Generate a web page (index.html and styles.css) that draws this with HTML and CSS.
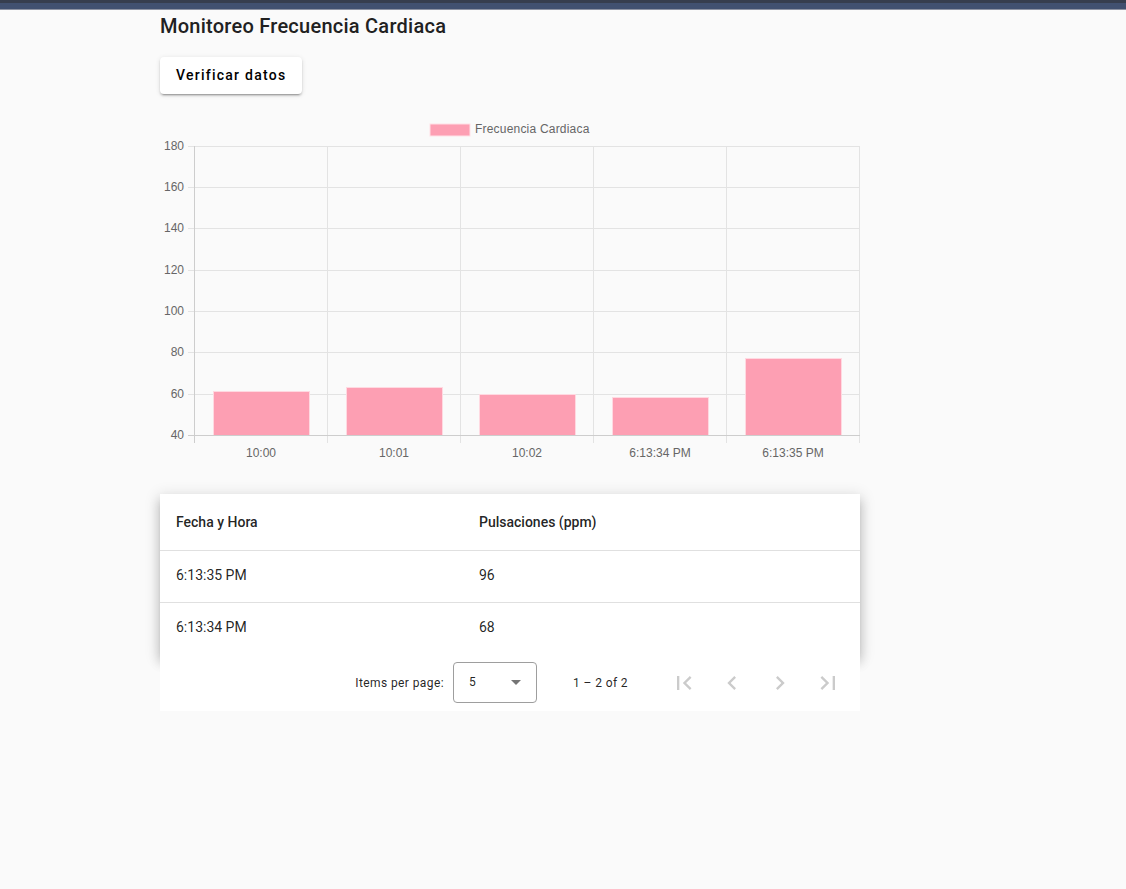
FILE: index.html
```html
<!DOCTYPE html>
<html lang="es">
<head>
<meta charset="utf-8">
<title>Monitoreo Frecuencia Cardiaca</title>
<link rel="stylesheet" href="styles.css">
</head>
<body>
<div class="topbar"></div>
<main class="page">
  <h2 class="title">Monitoreo Frecuencia Cardiaca</h2>
  <button class="btn">Verificar datos</button>

  <svg class="chart" width="700" height="360" viewBox="160 112 700 360" xmlns="http://www.w3.org/2000/svg">
    <rect x="430" y="124" width="40" height="12" fill="#fd9fb3" stroke="#ffe0e6" stroke-width="1"/>
    <text class="lbl legend" x="475" y="132.5">Frecuencia Cardiaca</text>
    <g class="grid">
      <line x1="188" y1="146.5" x2="860" y2="146.5"/>
      <line x1="188" y1="187.5" x2="860" y2="187.5"/>
      <line x1="188" y1="228.5" x2="860" y2="228.5"/>
      <line x1="188" y1="270.5" x2="860" y2="270.5"/>
      <line x1="188" y1="311.5" x2="860" y2="311.5"/>
      <line x1="188" y1="352.5" x2="860" y2="352.5"/>
      <line x1="188" y1="394.5" x2="860" y2="394.5"/>
      <line x1="327.5" y1="146" x2="327.5" y2="443"/>
      <line x1="460.5" y1="146" x2="460.5" y2="443"/>
      <line x1="593.5" y1="146" x2="593.5" y2="443"/>
      <line x1="726.5" y1="146" x2="726.5" y2="443"/>
      <line x1="859.5" y1="146" x2="859.5" y2="443"/>
    </g>
    <g class="bars">
      <rect x="213.5" y="391.5" width="96" height="44"/>
      <rect x="346.5" y="387.5" width="96" height="48"/>
      <rect x="479.5" y="394.5" width="96" height="41"/>
      <rect x="612.5" y="397.5" width="96" height="38"/>
      <rect x="745.5" y="358.5" width="96" height="77"/>
    </g>
    <g class="axis">
      <line x1="194.5" y1="146" x2="194.5" y2="443"/>
      <line x1="188" y1="435.5" x2="860" y2="435.5"/>
    </g>
    <g class="lbl yl">
      <text x="184" y="150">180</text>
      <text x="184" y="191">160</text>
      <text x="184" y="232">140</text>
      <text x="184" y="274">120</text>
      <text x="184" y="315">100</text>
      <text x="184" y="356">80</text>
      <text x="184" y="398">60</text>
      <text x="184" y="439">40</text>
    </g>
    <g class="lbl xl">
      <text x="261" y="457">10:00</text>
      <text x="394" y="457">10:01</text>
      <text x="527" y="457">10:02</text>
      <text x="660" y="457">6:13:34 PM</text>
      <text x="793" y="457">6:13:35 PM</text>
    </g>
  </svg>

  <section class="table-card">
    <div class="row head">
      <div class="cell c1">Fecha y Hora</div>
      <div class="cell">Pulsaciones (ppm)</div>
    </div>
    <div class="row">
      <div class="cell c1">6:13:35 PM</div>
      <div class="cell">96</div>
    </div>
    <div class="row last">
      <div class="cell c1">6:13:34 PM</div>
      <div class="cell">68</div>
    </div>
  </section>
  <div class="paginator">
    <span class="ipp">Items per page:</span>
    <div class="select"><span>5</span><span class="arrow"></span></div>
    <span class="range">1 – 2 of 2</span>
    <div class="navs">
      <span class="nav"><svg viewBox="0 0 24 24" width="28" height="28"><path d="M18.41 16.59L13.82 12l4.59-4.59L17 6l-6 6 6 6zM6 6h2v12H6z"/></svg></span>
      <span class="nav"><svg viewBox="0 0 24 24" width="28" height="28"><path d="M15.41 7.41L14 6l-6 6 6 6 1.41-1.41L10.83 12z"/></svg></span>
      <span class="nav"><svg viewBox="0 0 24 24" width="28" height="28"><path d="M10 6L8.59 7.41 13.17 12l-4.58 4.59L10 18l6-6z"/></svg></span>
      <span class="nav"><svg viewBox="0 0 24 24" width="28" height="28"><path d="M5.59 7.41L10.18 12l-4.59 4.59L7 18l6-6-6-6zM16 6h2v12h-2z"/></svg></span>
    </div>
  </div>
</main>
</body>
</html>
```

FILE: styles.css
```css
* { box-sizing: border-box; }
html, body { margin: 0; padding: 0; }
body {
  background: #fafafa;
  font-family: Roboto, "Noto Sans", sans-serif;
  color: rgba(0,0,0,.87);
  width: 1126px;
  height: 889px;
  overflow: hidden;
}
.topbar {
  height: 10px;
  background: linear-gradient(#363e4e 0, #363e4e 3px, #415170 3px, #415170 9px, #8d93a2 9px, #8d93a2 10px);
}
.page {
  margin-left: 160px;
  width: 700px;
  display: flex;
  flex-direction: column;
  align-items: flex-start;
}
.title {
  margin: 0;
  font-size: 20px;
  font-weight: 500;
  line-height: 32px;
  letter-spacing: 0.25px;
  color: #212121;
}
.btn {
  margin-top: 15px;
  height: 37px;
  padding: 0 16px 2px;
  border: none;
  border-radius: 4px;
  background: #fff;
  font-family: Roboto, sans-serif;
  font-size: 14px;
  font-weight: 500;
  letter-spacing: 1.25px;
  color: #000;
  box-shadow: 0 3px 1px -2px rgba(0,0,0,.2), 0 2px 2px 0 rgba(0,0,0,.14), 0 1px 5px 0 rgba(0,0,0,.12);
}
.chart {
  display: block;
  margin-top: 18px;
}
.chart .grid line { stroke: #e3e3e3; stroke-width: 1; }
.chart .axis line { stroke: #cdcdcd; stroke-width: 1; }
.chart .bars rect { fill: #fd9fb3; stroke: #ffd9e1; stroke-width: 1; }
.chart .lbl, .chart text {
  font-family: "Liberation Sans", Arial, sans-serif;
  font-size: 12px;
  fill: #666;
}
.chart .legend { letter-spacing: 0.2px; }
.chart .yl text { text-anchor: end; }
.chart .xl text { text-anchor: middle; }
.table-card {
  margin-top: 22px;
  width: 700px;
  background: #fff;
  box-shadow: 0 5px 5px -3px rgba(0,0,0,.2), 0 8px 10px 1px rgba(0,0,0,.14), 0 3px 14px 2px rgba(0,0,0,.12);
  position: relative;
}
.row {
  display: flex;
  align-items: center;
  height: 52px;
  padding-bottom: 3px;
  border-bottom: 1px solid #e0e0e0;
  font-size: 14px;
}
.row.head { height: 57px; padding-bottom: 0; font-weight: 500; }
.row.last { border-bottom: none; padding-bottom: 5px; }
.cell { padding-left: 16px; }
.cell.c1 { width: 303px; }
.paginator {
  width: 700px;
  height: 56px;
  background: #fff;
  display: flex;
  align-items: center;
  justify-content: flex-end;
  padding-right: 8px;
  font-size: 12px;
  letter-spacing: 0.4px;
  position: relative;
  z-index: 1;
}
.ipp { margin-right: 9px; }
.select {
  width: 84px;
  height: 41px;
  margin-bottom: 2px;
  border: 1px solid #9e9e9e;
  border-radius: 4px;
  display: flex;
  align-items: center;
  justify-content: space-between;
  padding: 0 15px 0 15px;
  font-size: 12px;
}
.arrow {
  width: 0; height: 0;
  border-left: 5px solid transparent;
  border-right: 5px solid transparent;
  border-top: 5px solid rgba(0,0,0,.54);
}
.range { margin: 0 32px 0 36px; }
.navs { display: flex; }
.nav {
  width: 48px;
  height: 48px;
  display: flex;
  align-items: center;
  justify-content: center;
}
.nav svg { fill: #cbcbcb; }
```
